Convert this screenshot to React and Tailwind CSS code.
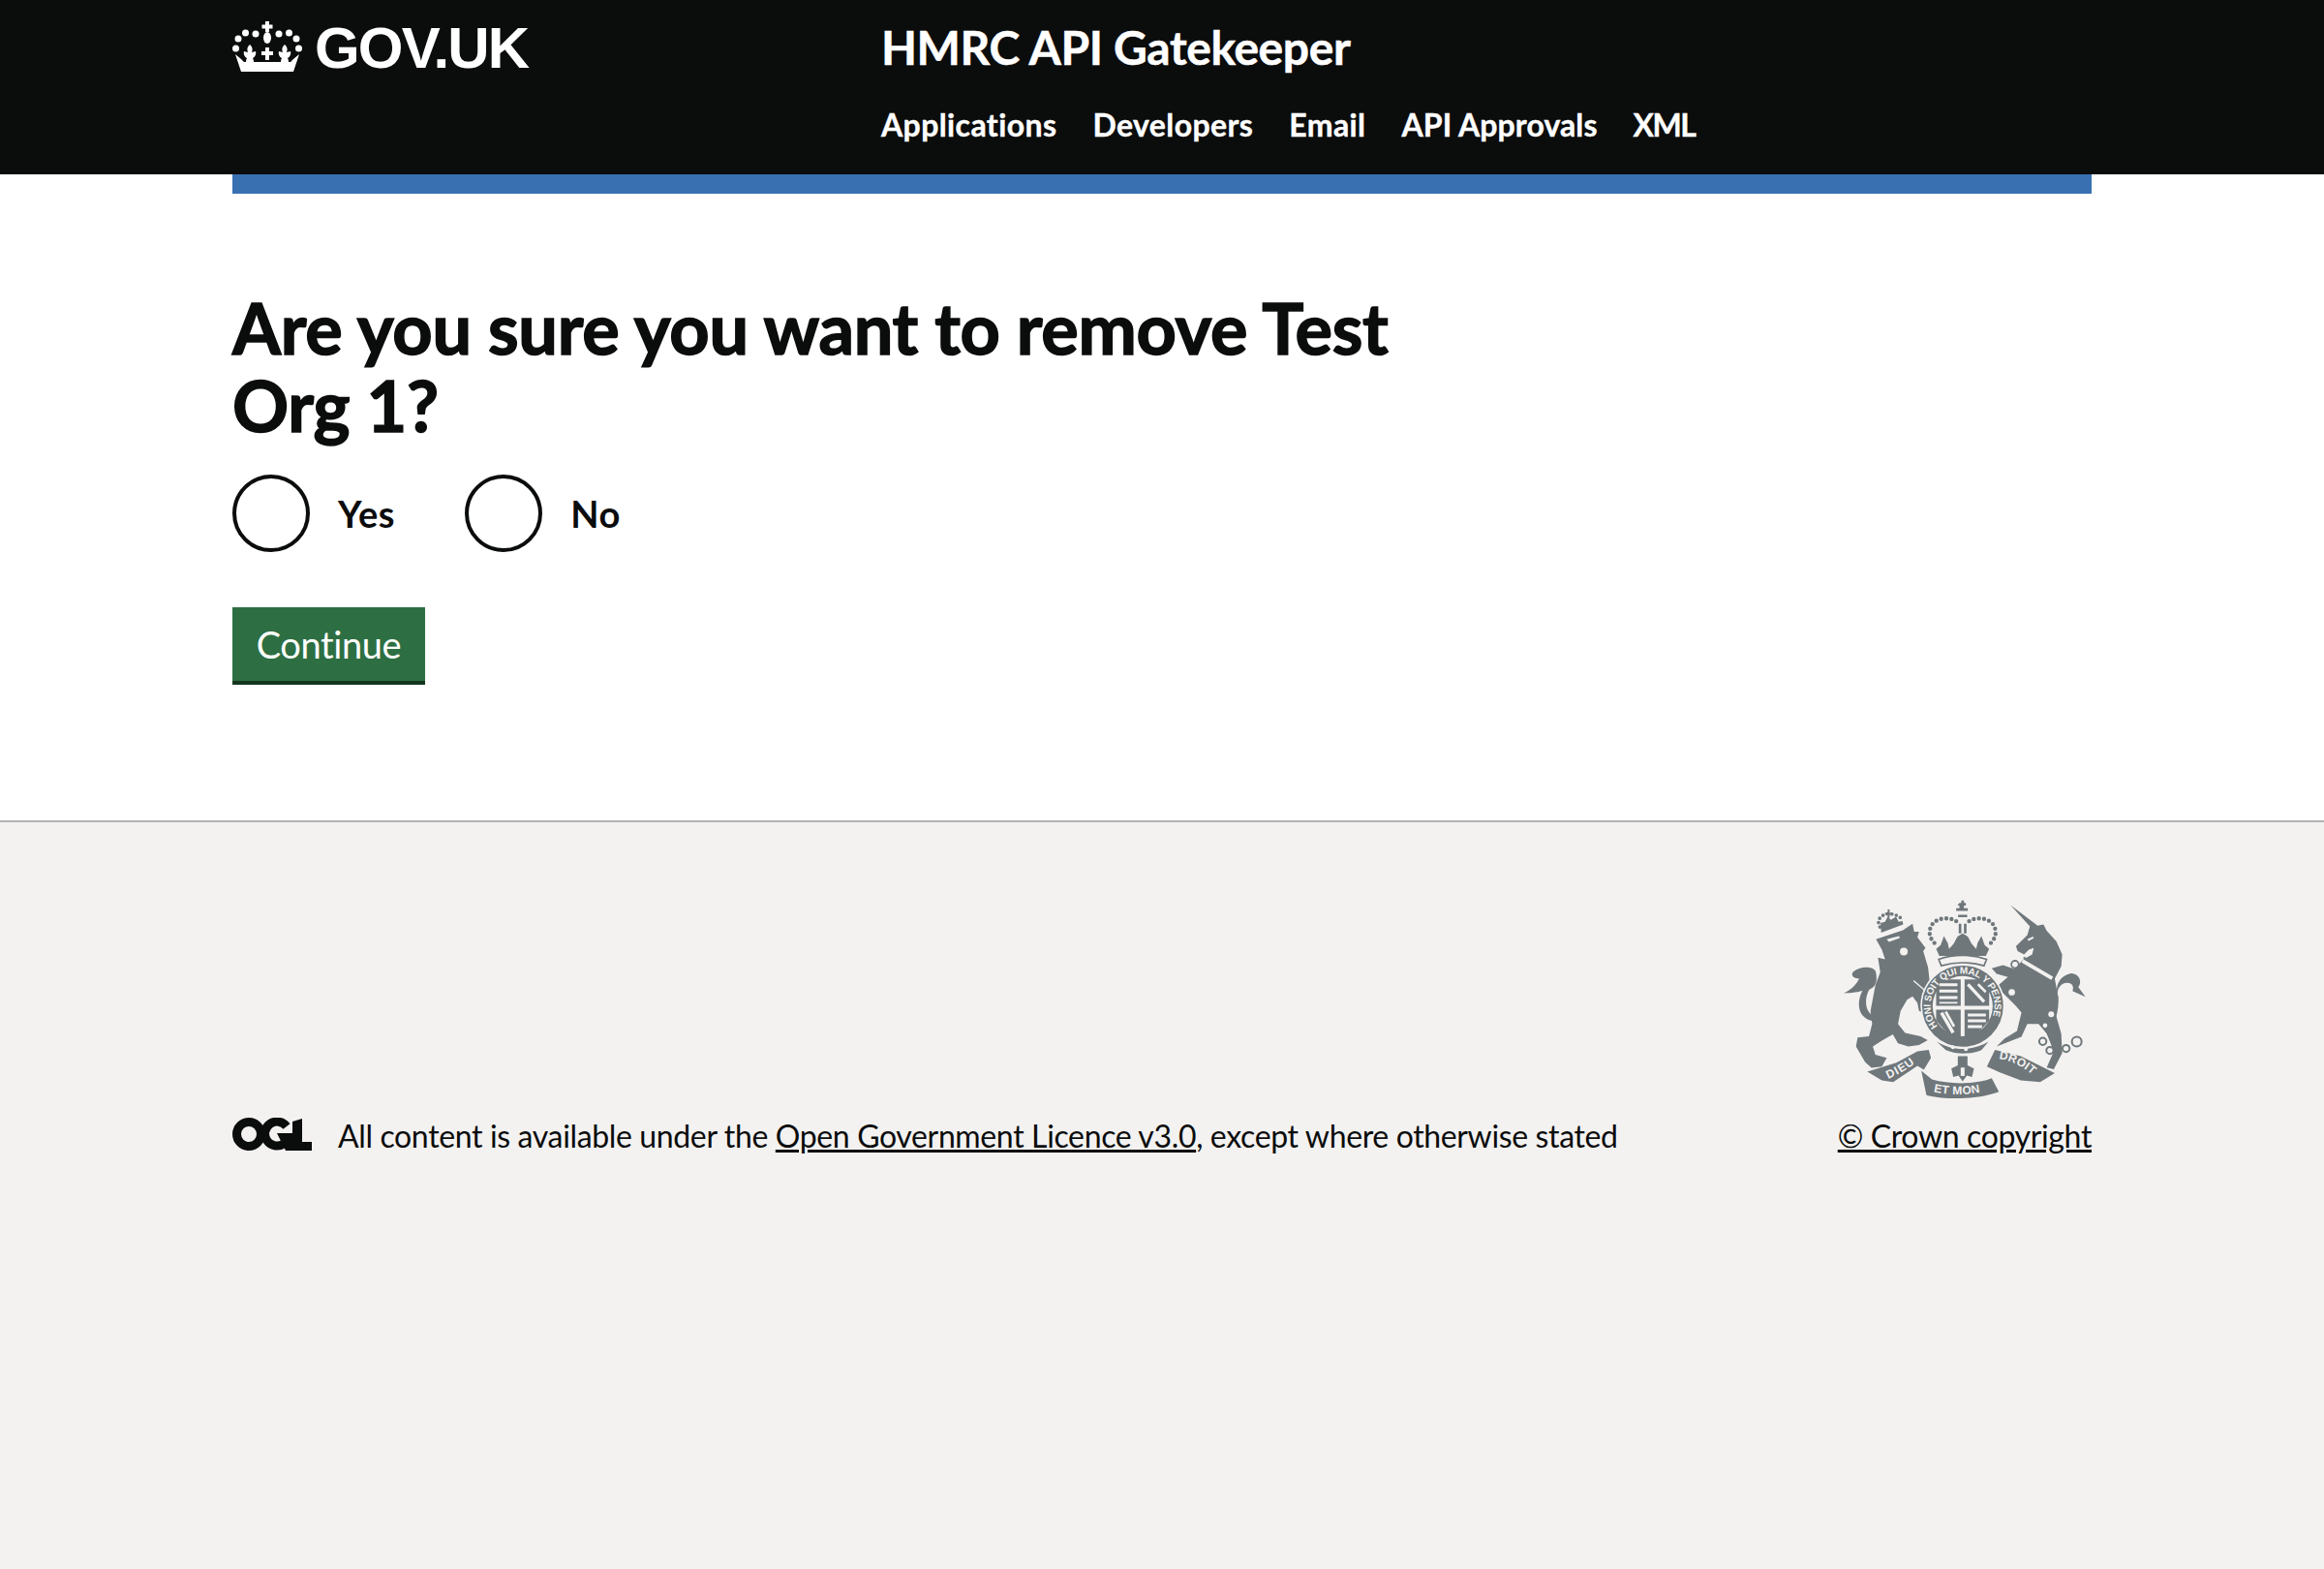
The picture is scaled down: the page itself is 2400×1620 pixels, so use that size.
import React from "react";

const Crown = () => (
  <svg width="72" height="52" viewBox="0 0 72 52" fill="#fff" className="shrink-0">
    <path d="M34 0h4v3.5h3.5v4H38V11h-4V7.5h-3.5v-4H34z" />
    <ellipse cx="36" cy="17" rx="4" ry="6" />
    <circle cx="24" cy="13" r="3.5" />
    <circle cx="48" cy="13" r="3.5" />
    <circle cx="13.5" cy="12" r="3.5" />
    <circle cx="58.5" cy="12" r="3.5" />
    <circle cx="6" cy="18" r="3.5" />
    <circle cx="66" cy="18" r="3.5" />
    <circle cx="3.5" cy="28" r="3.5" />
    <circle cx="68.5" cy="28" r="3.5" />
    {/* fleurs and centre cross */}
    <path d="M34 27h4v4h4v4h-4v5h-4v-5h-4v-4h4z" />
    <path d="M18 24c3 3 3 5 2 8l4-1c1 3-1 6-3 7 1 2 1 3 1 4h-8c0-1 0-2 1-4-2-1-4-4-3-7l4 1c-1-3-1-5 2-8z" />
    <path d="M54 24c3 3 3 5 2 8l4-1c1 3-1 6-3 7 1 2 1 3 1 4h-8c0-1 0-2 1-4-2-1-4-4-3-7l4 1c-1-3-1-5 2-8z" />
    <path d="M3 34l6 5 3 3h48l3-3 6-5-6 18H9z" />
  </svg>
);

const OglLogo = () => (
  <svg width="82" height="34" viewBox="0 0 82 34" className="shrink-0 mb-[4px]">
    <circle cx="17" cy="17" r="12.5" fill="none" stroke="#0b0c0c" strokeWidth="9" />
    <path d="M56 9A12.5 12.5 0 1 0 53 27" fill="none" stroke="#0b0c0c" strokeWidth="9" />
    <path d="M46 16h16v18h-7z" fill="#0b0c0c" />
    <path d="M62 4l10-3v24h10v9H62z" fill="#0b0c0c" />
  </svg>
);

const CoatOfArms = () => (
  <svg width="257" height="207" viewBox="60 50 770 620" fill="#6f777b" className="mb-[19px]">
    <defs>
      <path id="garter" d="M363 447A99 99 0 1 1 514 449" />
      <path id="dieu" d="M210 610C250 592 285 572 312 542" />
      <path id="etmon" d="M350 650C400 662 480 662 525 642" />
      <path id="droit" d="M552 548C600 555 640 580 672 614" />
    </defs>

    {/* royal crown */}
    <path d="M430 66h6V58h8v8h6v8h-6v8h12v8h-36v-8h10v-8h-6zM426 102h28v8h-28zM428 130h8v30h-8zM444 130h8v30h-8z" />
    <g fill="none" stroke="#6f777b" strokeWidth="13" strokeDasharray="0 16" strokeLinecap="round">
      <path d="M420 122C395 105 340 112 338 155c-1 16 8 28 18 38" />
      <path d="M460 122c25-17 80-10 82 33 1 16-8 28-18 38" />
    </g>
    <path d="M358 208l14-12 10-28 12 22 4 18 14-16 12-22 16-10 16 10 12 22 14 16 4-18 12-22 10 28 14 12-10 22H368z" />
    <path d="M366 240c46-16 102-16 148 0l-8 20c-42-12-90-12-132 0z" fill="#f3f2f1" stroke="#6f777b" strokeWidth="5" />

    {/* lion crown */}
    <g fill="none" stroke="#6f777b" strokeWidth="11" strokeDasharray="0 14" strokeLinecap="round">
      <path d="M184 140C165 105 215 85 248 112" />
    </g>
    <path d="M186 128l14-4 8-16 10 10 16-10 8 16 12-2 2 10-68 26z" />
    <path d="M200 96h8V86h6v10h8v6h-8v10h-6v-10h-8z" />

    {/* lion */}
    <path d="M172 178L210 165 255 150 285 130 290 155 305 155 300 172 325 205 318 215 333 265 340 330 348 395 335 412 305 400 300 375 285 355 268 365 248 400 240 440 262 468 310 478 332 490 305 505 272 510 240 500 224 472 190 492 162 510 170 535 205 545 190 572 158 576 138 558 110 510 115 482 150 478 160 440 155 400 170 320 185 280 178 235 200 240 190 210z" />
    <path d="M172 282C170 262 125 258 100 280c-5 10 0 20 20 20-10 20-25 35-48 45 25 0 48-4 58-8-20 40-15 85 35 95l6-16c-32-6-38-50-20-82 25-12 24-30 21-52z" />
    <circle cx="258" cy="216" r="12" fill="#f3f2f1" />
    <path d="M205 178l38-10 3 6-34 12z" fill="#f3f2f1" />
    <path d="M288 306l46 40" stroke="#f3f2f1" strokeWidth="4" fill="none" />

    {/* unicorn */}
    <path d="M588 72L672 136 690 132 700 152 730 185 748 225 745 262 725 300 735 355 725 400 745 470 748 530 722 580 700 575 722 525 700 470 675 440 640 440 622 480 545 510 570 485 608 462 622 405 605 385 545 325 580 295 545 285 530 268 565 258 600 270 628 240 655 225 660 205 645 210 630 225 610 215 605 200 640 165 648 138z" />
    <path d="M733 350c-8-30 10-60 40-66 22-2 40 20 25 42l22 30-40-18c8-24-15-30-30-22-14 8-20 26-14 40 2 30-4 60-14 84l-10-16c6-25 8-50 1-74z" />
    <path d="M640 178l18-8 2 5-16 8z" fill="#f3f2f1" />
    <path d="M628 240l92 54-6 10-92-54z" fill="#f3f2f1" />
    <path d="M632 232l10 10 6-12 8 14 8-8 6 14 8-6 6 14 10-6 8 16 10-6 4 18-90-44z" />
    <g fill="none" stroke="#6f777b" strokeWidth="6">
      <circle cx="602" cy="256" r="11" />
      <circle cx="688" cy="494" r="11" />
      <circle cx="710" cy="522" r="11" />
      <circle cx="760" cy="516" r="11" />
      <circle cx="793" cy="495" r="15" />
    </g>
    <g fill="#f3f2f1">
      <circle cx="714" cy="410" r="9" />
      <circle cx="695" cy="445" r="7" />
      <circle cx="592" cy="342" r="10" />
      <circle cx="602" cy="256" r="8" />
    </g>

    {/* garter and shield */}
    <circle cx="440" cy="385" r="128" stroke="#f3f2f1" strokeWidth="5" />
    <circle cx="440" cy="385" r="93" fill="#f3f2f1" />
    <path d="M358 302h76v82h-76zM446 302h76v82h-76zM358 396h76v88l-40-14-36-40zM446 396h76v34l-36 40-40 14z" />
    <path d="M368 314h56v9h-56zM368 334h56v9h-56zM368 354h56v9h-56zM368 372h56v5h-56zM456 408h56v9h-56zM456 426h56v9h-56zM456 444h44v9h-44zM370 408l36 62 9-5-36-62zM384 404l26 46 7-4-26-46zM460 314l50 54-7 7-50-54zM490 314l24 24-5 6-24-24z" fill="#f3f2f1" />
    <path d="M360 495c50 30 110 30 160 0l-22 26c-35 14-75 14-110 0z" />
    <circle cx="410" cy="512" r="6" fill="#f3f2f1" />
    <circle cx="450" cy="518" r="6" fill="#f3f2f1" />
    <text fontFamily="'Liberation Sans', sans-serif" fontSize="30" fontWeight="700" fill="#f3f2f1" letterSpacing="-0.6">
      <textPath href="#garter">HONI SOIT QUI MAL Y PENSE</textPath>
    </text>

    {/* motto scroll */}
    <path d="M145 588L235 560 300 525 335 520 342 545 320 582 300 570 225 620 190 615z" />
    <path d="M312 585L345 612C400 628 480 628 530 608L552 650C490 675 380 675 328 660z" />
    <path d="M515 572L540 520 620 540 725 592 680 620 620 615 555 590z" />
    <path d="M425 540h30v28l20 10-6 26-16-4-13 18-13-18-16 4-6-26 20-10z" />
    <path d="M434 575h12v26h-12z" fill="#f3f2f1" />
    <text fontFamily="'Liberation Sans', sans-serif" fontSize="36" fontWeight="700" fill="#f3f2f1" letterSpacing="3">
      <textPath href="#dieu">DIEU</textPath>
    </text>
    <text fontFamily="'Liberation Sans', sans-serif" fontSize="36" fontWeight="700" fill="#f3f2f1" letterSpacing="1">
      <textPath href="#etmon">ET MON</textPath>
    </text>
    <text fontFamily="'Liberation Sans', sans-serif" fontSize="36" fontWeight="700" fill="#f3f2f1" letterSpacing="1">
      <textPath href="#droit">DROIT</textPath>
    </text>
  </svg>
);

const Radio = ({ label }) => (
  <label className="flex items-center">
    <span className="w-[80px] h-[80px] rounded-full border-4 border-[#0b0c0c] bg-white shrink-0" />
    <span className="ml-[29px] text-[38px] font-bold leading-[50px] tracking-[0.6px] text-[#0b0c0c]">{label}</span>
  </label>
);

const navLinks = [
  { label: "Applications", className: "tracking-[0.4px]" },
  { label: "Developers", className: "tracking-[0.4px]" },
  { label: "Email", className: "tracking-[0.4px]" },
  { label: "API Approvals", className: "tracking-[0.1px]" },
  { label: "XML", className: "tracking-[-1.5px]" },
];

export default function App() {
  return (
    <div className="min-h-screen flex flex-col bg-white font-['Lato',sans-serif] text-[#0b0c0c]">
      <header className="h-[180px] bg-[#0b0c0c] text-white px-[240px] flex shrink-0">
        <div className="w-[671px] flex items-start pt-[22px] gap-[13px] shrink-0">
          <Crown />
          <span className="font-['Liberation_Sans',sans-serif] font-bold text-[60px] leading-[55px] tracking-[-1.8px]">GOV.UK</span>
        </div>
        <div className="pt-[20px] -ml-[1px]">
          <div className="text-[48px] font-bold leading-[58px] tracking-[-0.4px] [-webkit-text-stroke:0.5px_#fff]">HMRC API Gatekeeper</div>
          <nav className="flex gap-[37px] mt-[31px] text-[32px] font-bold leading-[40px] [-webkit-text-stroke:0.4px_#fff]">
            {navLinks.map((l) => (
              <a key={l.label} className={l.className}>{l.label}</a>
            ))}
          </nav>
        </div>
      </header>

      <div className="px-[240px]">
        <div className="h-[20px] bg-[#3870b2]" />
      </div>

      <main className="px-[240px] h-[647px] shrink-0 pt-[98px]">
        <h1 className="text-[72px] font-bold leading-[80px] tracking-[-0.28px] max-w-[1280px] [-webkit-text-stroke:1.5px_#0b0c0c]">
          Are you sure you want to remove Test Org 1?
        </h1>
        <div className="flex gap-[72px] mt-[32px]">
          <Radio label="Yes" />
          <Radio label="No" />
        </div>
        <button className="block mt-[57px] w-[199px] h-[80px] bg-[#2d6f43] border-b-4 border-[#14361f] text-white text-[38px] leading-[50px] tracking-[-0.4px]">
          Continue
        </button>
      </main>

      <footer className="flex-1 bg-[#f3f2f1] border-t-2 border-[#b1b4b6] px-[240px] pt-[78px]">
        <div className="flex items-end justify-between">
          <div className="flex items-center gap-[27px] text-[32px] leading-[40px] tracking-[-0.36px]">
            <OglLogo />
            <span>
              All content is available under the <a className="underline">Open Government Licence v3.0</a>, except where otherwise stated
            </span>
          </div>
          <div className="flex flex-col items-center text-[32px] leading-[40px] tracking-[-0.36px]">
            <CoatOfArms />
            <a className="underline">© Crown copyright</a>
          </div>
        </div>
      </footer>
    </div>
  );
}
